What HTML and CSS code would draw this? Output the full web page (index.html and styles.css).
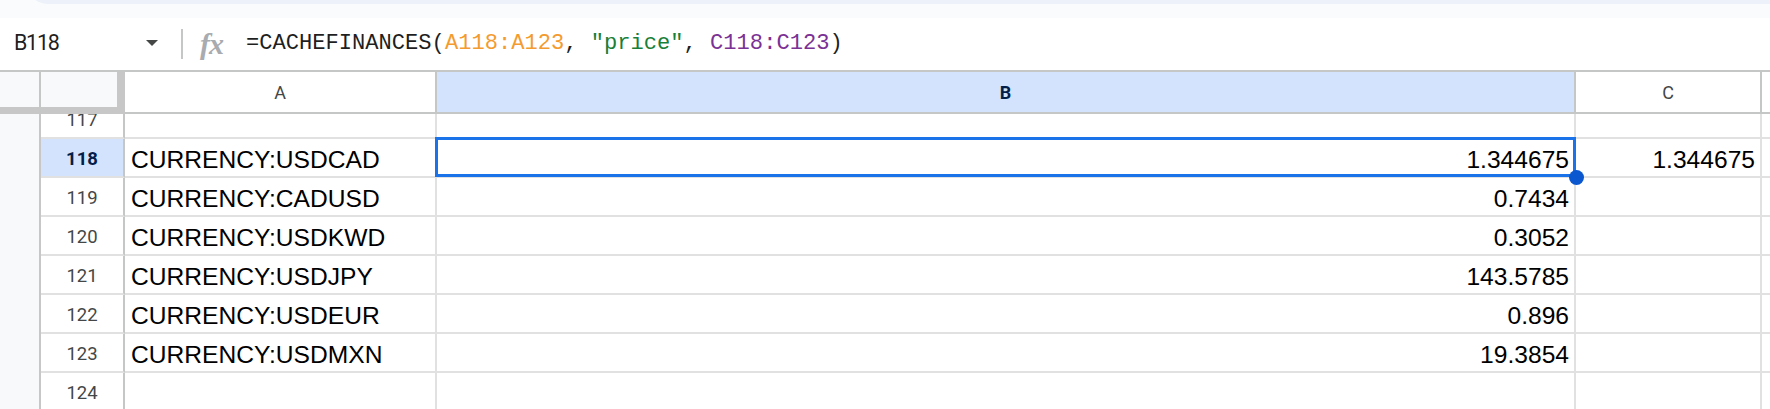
FILE: index.html
```html
<!DOCTYPE html>
<html>
<head>
<meta charset="utf-8">
<link rel="stylesheet" href="styles.css">
</head>
<body>
<div class="app">
  <div class="topband"><div class="toolbar"></div></div>
  <div class="formulabar">
    <div class="namebox"><span class="name">B118</span><span class="caret"></span></div>
    <div class="divider"></div>
    <span class="fx">fx</span>
    <div class="formula">=CACHEFINANCES(<span class="r1">A118:A123</span>, <span class="str">"price"</span>, <span class="r2">C118:C123</span>)</div>
  </div>
  <div class="sheet">
    <div class="hrow">
      <div class="hg"></div>
      <div class="hcorner"></div>
      <div class="ch">A</div>
      <div class="ch sel">B</div>
      <div class="ch">C</div>
      <div class="ch rest"></div>
    </div>
    <div class="body">
      <div class="row first">
        <div class="gutter"></div><div class="rh">117</div><div class="c"></div><div class="c"></div><div class="c"></div><div class="c rest"></div>
      </div>
      <div class="row">
        <div class="gutter"></div><div class="rh sel">118</div><div class="c txt">CURRENCY:USDCAD</div>
        <div class="c num active">1.344675<div class="selbox"></div><div class="handle"></div></div>
        <div class="c num">1.344675</div><div class="c rest"></div>
      </div>
      <div class="row">
        <div class="gutter"></div><div class="rh">119</div><div class="c txt">CURRENCY:CADUSD</div><div class="c num">0.7434</div><div class="c"></div><div class="c rest"></div>
      </div>
      <div class="row">
        <div class="gutter"></div><div class="rh">120</div><div class="c txt">CURRENCY:USDKWD</div><div class="c num">0.3052</div><div class="c"></div><div class="c rest"></div>
      </div>
      <div class="row">
        <div class="gutter"></div><div class="rh">121</div><div class="c txt">CURRENCY:USDJPY</div><div class="c num">143.5785</div><div class="c"></div><div class="c rest"></div>
      </div>
      <div class="row">
        <div class="gutter"></div><div class="rh">122</div><div class="c txt">CURRENCY:USDEUR</div><div class="c num">0.896</div><div class="c"></div><div class="c rest"></div>
      </div>
      <div class="row">
        <div class="gutter"></div><div class="rh">123</div><div class="c txt">CURRENCY:USDMXN</div><div class="c num">19.3854</div><div class="c"></div><div class="c rest"></div>
      </div>
      <div class="row">
        <div class="gutter"></div><div class="rh">124</div><div class="c"></div><div class="c"></div><div class="c"></div><div class="c rest"></div>
      </div>
    </div>
  </div>
</div>
</body>
</html>
```
FILE: styles.css
```css
* { box-sizing: border-box; }
html, body { margin: 0; padding: 0; background: #ffffff; }
.app {
  width: 1770px;
  height: 409px;
  overflow: hidden;
  font-family: "Liberation Sans", Arial, sans-serif;
}
.topband {
  height: 18px;
  background: #f9fbfd;
  overflow: hidden;
}
.toolbar {
  height: 44px;
  margin-top: -40px;
  margin-left: 26px;
  margin-right: -40px;
  border-radius: 24px;
  background: #edf2fa;
}
.formulabar {
  height: 52px;
  display: flex;
  align-items: center;
  background: #ffffff;
}
.namebox {
  width: 168px;
  display: flex;
  align-items: center;
  padding-left: 14px;
}
.name {
  font-family: Roboto, "Liberation Sans", sans-serif;
  font-size: 21.5px;
  letter-spacing: -1.3px;
  color: #1f1f1f;
  margin-top: -3px;
}
.caret {
  margin-left: auto;
  margin-right: 10px;
  width: 0;
  height: 0;
  border-left: 6.5px solid transparent;
  border-right: 6.5px solid transparent;
  border-top: 6.5px solid #444746;
  margin-top: -2px;
}
.divider {
  width: 2px;
  height: 30px;
  margin-left: 13px;
  background: #c4c7c5;
}
.fx {
  margin-left: 17px;
  width: 46px;
  font-family: "Liberation Serif", serif;
  font-style: italic;
  font-weight: bold;
  font-size: 30px;
  color: #a8abaf;
  letter-spacing: -1px;
  margin-top: -1px;
}
.formula {
  font-family: "Liberation Mono", "DejaVu Sans Mono", monospace;
  font-size: 22.1px;
  color: #1f1f1f;
  white-space: pre;
  margin-top: -1px;
}
.r1 { color: #f49b30; }
.str { color: #188038; }
.r2 { color: #7b3294; }

.sheet {
  border-top: 2px solid #c4c7c5;
}
.hrow, .row {
  display: grid;
  grid-template-columns: 41px 84px 312px 1139px 186px 1fr;
}
.hrow > div {
  height: 42px;
  border-right: 2px solid #c4c7c5;
  border-bottom: 2px solid #c4c7c5;
  background: #ffffff;
}
.hrow .hg {
  background: #f8f9fa;
  border-bottom: 7px solid #c7c7c7;
}
.hrow .hcorner {
  background: #f8f9fa;
  border-right: 8px solid #c7c7c7;
  border-bottom: 7px solid #c7c7c7;
}
.ch {
  display: flex;
  align-items: center;
  justify-content: center;
  font-family: Roboto, "Liberation Sans", sans-serif;
  font-size: 18px;
  color: #444746;
}
.hrow .ch.sel {
  background: #d3e3fd;
  color: #041e49;
  font-weight: bold;
}
.hrow .rest { border-right: none; }

.body {
  height: 295px;
  overflow: hidden;
}
.row > div {
  height: 39px;
  border-right: 2px solid #e1e1e1;
  border-bottom: 2px solid #e1e1e1;
}
.row.first { margin-top: -14px; }
.row .gutter {
  background: #f8f9fa;
  border-right: 2px solid #c7c7c7;
  border-bottom: none;
}
.rh {
  display: flex;
  align-items: center;
  justify-content: center;
  padding-top: 3px;
  font-family: Roboto, "Liberation Sans", sans-serif;
  font-size: 18.5px;
  color: #444746;
}
.row .rh { border-right: 2px solid #c4c7c5; }
.row .rh.sel {
  background: #d3e3fd;
  color: #041e49;
  font-weight: bold;
}
.c {
  display: flex;
  align-items: flex-end;
  padding: 0 5px 2px 6px;
  font-size: 24.6px;
  line-height: 28px;
  color: #000000;
  white-space: nowrap;
}
.c.num { justify-content: flex-end; }
.row .rest { border-right: none; }
.active { position: relative; }
.selbox {
  position: absolute;
  left: -2px;
  top: -2px;
  right: -2px;
  bottom: -1px;
  border: 3px solid #1a73e8;
  z-index: 2;
}
.handle {
  position: absolute;
  right: -9.5px;
  bottom: -8.5px;
  width: 15px;
  height: 15px;
  border-radius: 50%;
  background: #0b57d0;
  z-index: 3;
}
```
